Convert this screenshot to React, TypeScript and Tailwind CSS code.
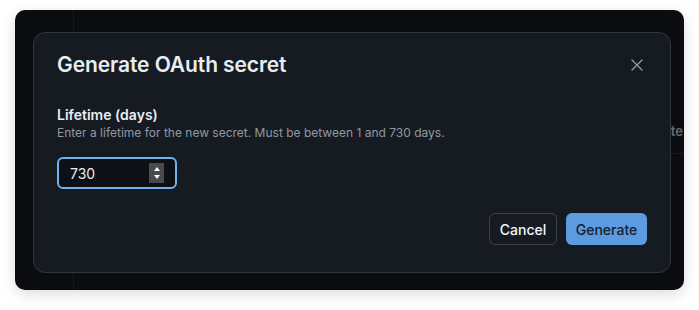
export default function App() {
  return (
    <div
      className="w-[699px] h-[310px] bg-white pt-[10px] pl-[15px]"
      style={{ fontFamily: 'Inter, "Noto Sans", sans-serif' }}
    >
      <div className="relative w-[669px] h-[280px] rounded-[10px] bg-[#0a0c0f] overflow-hidden shadow-[0_4px_14px_rgba(0,0,0,0.14)] pt-[22px] pl-[18px]">
        {/* page behind the backdrop */}
        <div className="absolute inset-y-0 left-[58px] w-px bg-[#161a1f]" />
        <div className="absolute right-0 top-[108px] w-[60px] border-b border-[#171b21] pb-[11px] pr-[1px] text-right">
          <span className="text-[13px] font-semibold text-[#656c76] leading-4">Delete</span>
        </div>

        {/* dialog */}
        <div className="relative w-[638px] h-[241px] rounded-[12px] bg-[#161b22] border border-[#30363d] px-[23px] pt-[18px] flex flex-col">
          <div className="flex items-center justify-between">
            <h2 className="text-[21px] leading-7 font-semibold text-[#e6edf3] tracking-[-0.1px]">
              Generate OAuth secret
            </h2>
            <button className="w-[16px] h-[16px] flex items-center justify-center text-[#9198a1] mr-[2px]">
              <svg width="12" height="12" viewBox="0 0 12 12" fill="none" stroke="currentColor" strokeWidth="1.4" strokeLinecap="round">
                <path d="M1 1l10 10M11 1L1 11" />
              </svg>
            </button>
          </div>

          <div className="mt-[26px]">
            <label className="block text-[14px] leading-5 font-semibold text-[#e6edf3]">Lifetime (days)</label>
            <p className="text-[12px] leading-4 text-[#9198a1]">
              Enter a lifetime for the new secret. Must be between 1 and 730 days.
            </p>
          </div>

          <div className="mt-[16px] w-[120px] h-[32px] rounded-[6px] border-2 border-[#71b1f0] bg-[#0d1117] flex items-center pl-[11px] pr-[11px]">
            <span className="flex-1 text-[14px] text-[#e6edf3]">730</span>
            <div className="w-[15px] h-[20px] bg-[#4a4a4c] flex flex-col items-center justify-center gap-[4px]">
              <div className="w-0 h-0 border-l-[3.5px] border-r-[3.5px] border-b-[4px] border-l-transparent border-r-transparent border-b-white" />
              <div className="w-0 h-0 border-l-[3.5px] border-r-[3.5px] border-t-[4px] border-l-transparent border-r-transparent border-t-white" />
            </div>
          </div>

          <div className="mt-[24px] flex justify-end gap-[9px]">
            <button className="h-[32px] w-[68px] rounded-[6px] border border-[#3d444d] bg-[#171b21] text-[14px] font-medium text-[#f0f6fc]">
              Cancel
            </button>
            <button className="h-[32px] w-[81px] rounded-[6px] bg-[#5c9be0] text-[14px] font-medium text-[#15202e]">
              Generate
            </button>
          </div>
        </div>
      </div>
    </div>
  )
}
